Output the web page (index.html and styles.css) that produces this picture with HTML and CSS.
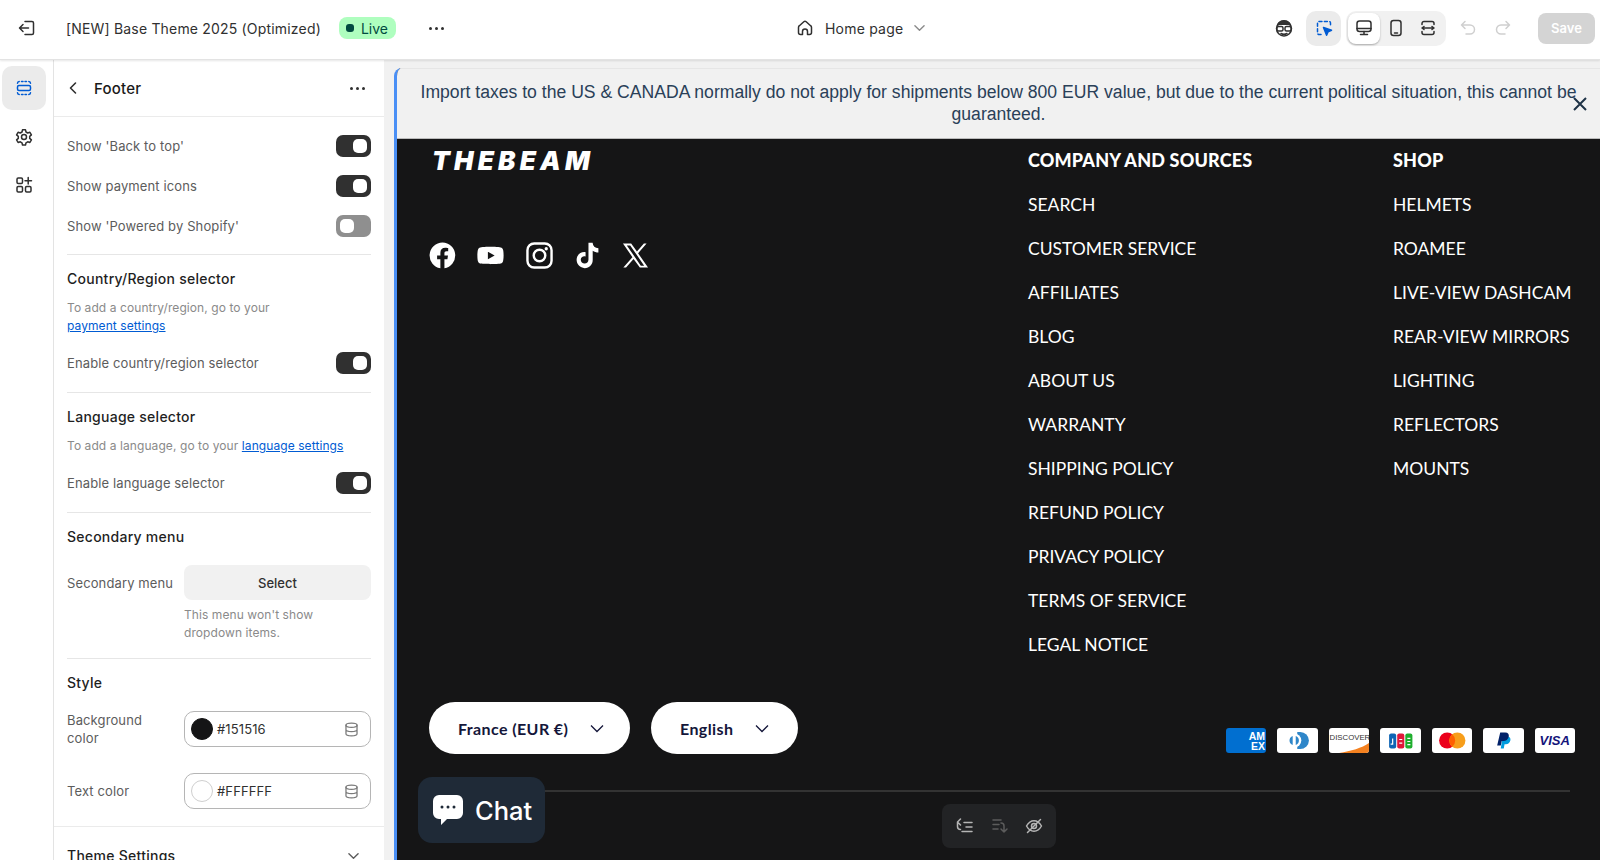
FILE: index.html
```html
<!DOCTYPE html>
<html lang="en">
<head>
  <meta charset="UTF-8">
  <title>Footer - Theme editor</title>
  <link rel="stylesheet" href="styles.css">
</head>
<body>

  <header class="topbar">
    <svg class="ico exit" viewBox="0 0 20 20"><path d="M8 3.500h7a1.500 1.500 0 0 1 1.500 1.500v10a1.500 1.500 0 0 1-1.500 1.500H8M11.500 10H3M6 6.500 2.500 10 6 13.500"/></svg>
    <span class="theme-name">[NEW] Base Theme 2025 (Optimized)</span>
    <span class="live"><i></i>Live</span>
    <span class="dots top-dots"><i></i><i></i><i></i></span>

    <div class="page-picker">
      <svg class="ico" viewBox="0 0 20 20"><path d="M7.500 16.500H5.500a2 2 0 0 1-2-2V9.500c0-.8.3-1.300.9-1.800l4.400-3.900a1.800 1.800 0 0 1 2.400 0l4.400 3.900c.6.5.9 1 .9 1.800v5a2 2 0 0 1-2 2h-2v-3a2.500 2.500 0 0 0-5 0z"/></svg>
      <span>Home page</span>
      <svg class="chev" viewBox="0 0 12 8"><path d="M1 1.500 6 6.500l5-5"/></svg>
    </div>

    <div class="top-tools">
      <svg class="ico face" viewBox="0 0 20 20"><circle cx="10" cy="10.500" r="7.500" fill="#fff"/><path class="solid" d="M3 9c-.5-4 3-7 7-7s7.500 3 7 7c-1-1.500-2-2-3-2H6c-1 0-2 .5-3 2z"/><rect x="3" y="8.500" width="6" height="4.500" rx="1.500" fill="#fff"/><rect x="11" y="8.500" width="6" height="4.500" rx="1.500" fill="#fff"/><path d="M7 15.500c2 1 4 1 6 0"/></svg>
      <span class="inspect">
        <svg class="ico blue" viewBox="0 0 20 20"><path stroke-dasharray="3 2.400" d="M7 16.500H5a1.500 1.500 0 0 1-1.500-1.500V5A1.500 1.500 0 0 1 5 3.500h10A1.500 1.500 0 0 1 16.500 5v2"/><path class="solid-blue" d="m9.500 9.500 8 2.700-3.400 1.500-1.500 3.600z"/></svg>
      </span>
      <div class="view-group">
        <span class="view on">
          <svg class="ico" viewBox="0 0 20 20"><rect x="3" y="3" width="14" height="10.500" rx="2.500"/><path d="M3 10.500h14M10 13.500v3M6.500 16.500h7"/></svg>
        </span>
        <span class="view">
          <svg class="ico" viewBox="0 0 20 20"><rect x="5" y="2.500" width="10" height="15" rx="2.500"/><path d="M8.500 15h3"/></svg>
        </span>
        <span class="view">
          <svg class="ico" viewBox="0 0 20 20"><path d="M4 6.500V5.500a2 2 0 0 1 2-2h8a2 2 0 0 1 2 2v1M4 13.500v1a2 2 0 0 0 2 2h8a2 2 0 0 0 2-2v-1M4 10h12M6 8.500 4 10l2 1.500M14 8.500l2 1.500-2 1.500"/></svg>
        </span>
      </div>
      <svg class="ico faded undo" viewBox="0 0 20 20"><path d="M7 3.500 3.500 7 7 10.500M3.500 7H12a4.500 4.500 0 0 1 0 9H8"/></svg>
      <svg class="ico faded redo" viewBox="0 0 20 20"><path d="M13 3.500 16.500 7 13 10.500M16.500 7H8a4.500 4.500 0 0 0 0 9h4"/></svg>
      <button class="save">Save</button>
    </div>
  </header>

  <div class="main">
    <nav class="rail">
      <span class="rail-btn active">
        <svg class="ico blue" viewBox="0 0 20 20"><rect x="3.500" y="7.500" width="13" height="5" rx="1.500"/><path d="M3.500 5.200A1.800 1.800 0 0 1 5.200 3.500M7.500 3.500h1.500M11 3.500h1.500M14.800 3.500a1.800 1.800 0 0 1 1.700 1.700M3.500 14.800a1.800 1.800 0 0 0 1.700 1.700M7.500 16.500h1.500M11 16.500h1.500M14.800 16.500a1.800 1.800 0 0 0 1.700-1.700"/></svg>
      </span>
      <span class="rail-btn">
        <svg class="ico" viewBox="0 0 20 20"><circle cx="10" cy="10" r="2.500"/><path d="M8.500 2.800h3l.5 2.200 1.700 1 2.200-.7 1.500 2.600-1.700 1.500v2l1.700 1.500-1.500 2.600-2.200-.7-1.700 1-.5 2.200h-3l-.5-2.200-1.700-1-2.200.7-1.500-2.600 1.700-1.500v-2L2.600 7.900l1.500-2.600 2.200.7 1.700-1z"/></svg>
      </span>
      <span class="rail-btn">
        <svg class="ico" viewBox="0 0 20 20"><rect x="3" y="3" width="5.500" height="5.500" rx="1.200"/><rect x="3" y="11.500" width="5.500" height="5.500" rx="1.200"/><rect x="11.500" y="11.500" width="5.500" height="5.500" rx="1.200"/><path d="M14.200 2.500v6.500M11 5.700h6.500"/></svg>
      </span>
    </nav>

    <aside class="panel">
      <div class="panel-head">
        <svg class="back" viewBox="0 0 10 14"><path d="M7.500 2 2.500 7l5 5"/></svg>
        <h1>Footer</h1>
        <span class="dots"><i></i><i></i><i></i></span>
      </div>

      <div class="settings">
        <section class="group first">
          <div class="row"><label>Show 'Back to top'</label><span class="toggle"></span></div>
          <div class="row"><label>Show payment icons</label><span class="toggle"></span></div>
          <div class="row"><label>Show 'Powered by Shopify'</label><span class="toggle off"></span></div>
        </section>

        <section class="group">
          <h2>Country/Region selector</h2>
          <p class="help">To add a country/region, go to your<br><a href="#">payment settings</a></p>
          <div class="row"><label>Enable country/region selector</label><span class="toggle"></span></div>
        </section>

        <section class="group">
          <h2>Language selector</h2>
          <p class="help">To add a language, go to your <a href="#">language settings</a></p>
          <div class="row"><label>Enable language selector</label><span class="toggle"></span></div>
        </section>

        <section class="group menu-group">
          <h2>Secondary menu</h2>
          <div class="field">
            <label>Secondary menu</label>
            <div>
              <button class="select">Select</button>
              <p class="help under">This menu won't show dropdown items.</p>
            </div>
          </div>
        </section>

        <section class="group last">
          <h2>Style</h2>
          <div class="field mid">
            <label>Background<br>color</label>
            <div class="color">
              <span class="swatch dark"></span><span class="hex">#151516</span>
              <svg class="ico db" viewBox="0 0 20 20"><ellipse cx="10" cy="5" rx="6.500" ry="2.500"/><path d="M3.500 5v10c0 1.400 2.900 2.500 6.500 2.500s6.500-1.100 6.500-2.500V5M3.500 10c0 1.400 2.900 2.500 6.500 2.500s6.500-1.100 6.500-2.500"/></svg>
            </div>
          </div>
          <div class="field mid">
            <label>Text color</label>
            <div class="color">
              <span class="swatch"></span><span class="hex">#FFFFFF</span>
              <svg class="ico db" viewBox="0 0 20 20"><ellipse cx="10" cy="5" rx="6.500" ry="2.500"/><path d="M3.500 5v10c0 1.400 2.900 2.500 6.500 2.500s6.500-1.100 6.500-2.500V5M3.500 10c0 1.400 2.900 2.500 6.500 2.500s6.500-1.100 6.500-2.500"/></svg>
            </div>
          </div>
        </section>

        <div class="accordion">
          <h2>Theme Settings</h2>
          <svg class="chev" viewBox="0 0 12 8"><path d="M1 1.500 6 6.500l5-5"/></svg>
        </div>
      </div>
    </aside>

    <div class="preview">
      <div class="frame">
        <div class="notice">
          <p>Import taxes to the US &amp; CANADA normally do not apply for shipments below 800 EUR value, but due to the current political situation, this cannot be guaranteed.</p>
          <svg class="notice-x" viewBox="0 0 16 16"><path d="m2 2 12 12M14 2 2 14"/></svg>
        </div>

        <footer class="site-footer">
          <div class="foot-top">
            <div class="brand">
              <div class="logo">THEBEAM</div>
              <div class="socials">
                <svg viewBox="0 0 28 28"><path d="M14 .5a13.500 13.500 0 0 0-2.200 26.800v-9.500H8.400V14h3.400v-2.900c0-3.400 2-5.200 5.100-5.200 1.500 0 3 .3 3 .3v3.300h-1.700c-1.700 0-2.200 1-2.200 2.100V14h3.700l-.6 3.800h-3.100v9.500A13.500 13.500 0 0 0 14 .5z"/></svg>
                <svg viewBox="0 0 28 28"><path d="M27 8c-.3-1.200-1.200-2.100-2.400-2.400C22.500 5 14 5 14 5s-8.500 0-10.600.6C2.200 5.900 1.300 6.800 1 8c-.6 2.100-.6 6-.6 6s0 3.900.6 6c.3 1.200 1.200 2.100 2.400 2.400C5.500 23 14 23 14 23s8.500 0 10.600-.6c1.200-.3 2.100-1.200 2.400-2.400.6-2.100.6-6 .6-6s0-3.900-.6-6zM11.300 17.900v-7.800l7 3.900z"/></svg>
                <svg viewBox="0 0 28 28"><rect class="line" x="1.500" y="1.500" width="25" height="25" rx="7"/><circle class="line" cx="14" cy="14" r="6"/><circle cx="21" cy="7" r="1.700"/></svg>
                <svg viewBox="0 0 28 28"><path d="M15 .8h4.300c.3 3.300 2.400 5.500 6 5.800v4.400c-2.200 0-4.200-.7-5.900-1.900v9.500c0 4.700-3.500 8.500-8.300 8.500S2.700 23 2.700 18.500c0-5 4.300-8.800 9.300-8v4.500c-2.600-.7-5 1-5 3.500 0 2.200 1.800 3.900 4 3.900 2.300 0 4-1.700 4-4.200z"/></svg>
                <svg viewBox="0 0 28 28"><path d="M1 1.500h8.500l6 8.300 7.200-8.300h2.800l-8.800 10.200L27 26.500h-8.500l-6.500-9-7.800 9H1.400l9.400-10.800zm4 2 14.500 21h3.500L8.500 3.500z"/></svg>
              </div>
            </div>
            <div class="foot-col company">
              <h3>COMPANY AND SOURCES</h3>
              <a>SEARCH</a><a>CUSTOMER SERVICE</a><a>AFFILIATES</a><a>BLOG</a><a>ABOUT US</a><a>WARRANTY</a><a>SHIPPING POLICY</a><a>REFUND POLICY</a><a>PRIVACY POLICY</a><a>TERMS OF SERVICE</a><a>LEGAL NOTICE</a>
            </div>
            <div class="foot-col">
              <h3>SHOP</h3>
              <a>HELMETS</a><a>ROAMEE</a><a>LIVE-VIEW DASHCAM</a><a>REAR-VIEW MIRRORS</a><a>LIGHTING</a><a>REFLECTORS</a><a>MOUNTS</a>
            </div>
          </div>

          <div class="foot-bottom">
            <button class="pill country">France (EUR €)<svg viewBox="0 0 14 9"><path d="M1 1.500 7 7.500l6-6"/></svg></button>
            <button class="pill lang">English<svg viewBox="0 0 14 9"><path d="M1 1.500 7 7.500l6-6"/></svg></button>
            <div class="cards">
              <span class="card amex"><b>AM<br>EX</b></span>
              <span class="card">
                <svg viewBox="0 0 40 24"><path fill="#2e86c9" d="M20 3.500h3a8.500 8.500 0 0 1 0 17h-3z"/><circle cx="17" cy="12" r="7" fill="#fff"/><path fill="#2e86c9" d="M15.500 7.500v9a4.800 4.800 0 0 1 0-9zm3 0a4.800 4.800 0 0 1 0 9z"/></svg>
              </span>
              <span class="card discover">
                <em>DISCOVER</em>
                <svg viewBox="0 0 40 24" preserveAspectRatio="none"><path fill="#f48120" d="M10 24C22 22 33 19 40 14v10z"/></svg>
              </span>
              <span class="card">
                <svg viewBox="0 0 40 24"><rect x="9" y="5" width="7" height="15" rx="2" fill="#0e64b4"/><rect x="17" y="5" width="7" height="15" rx="2" fill="#e0173a"/><rect x="25" y="5" width="7" height="15" rx="2" fill="#1fae2e"/><path d="M12.500 10v5.500h-2M19 11h3M19 14.500h3M27 10h3M27 13h3M27 16h3" stroke="#fff" stroke-width="1.200" fill="none"/></svg>
              </span>
              <span class="card">
                <svg viewBox="0 0 40 24"><circle cx="15" cy="12" r="8" fill="#eb001b"/><circle cx="25" cy="12" r="8" fill="#f79e1b"/><path fill="#ff5f00" d="M20 5.800a8 8 0 0 1 0 12.400 8 8 0 0 1 0-12.400z"/></svg>
              </span>
              <span class="card">
                <svg viewBox="0 0 40 24"><path fill="#009cde" d="M19.500 8h4.500c2.500 0 3.600 1.800 3 4-.5 2.400-2.200 3.700-4.400 3.700h-1.300l-.8 4.300h-3z"/><path fill="#012169" d="M17 4h5c2.700 0 4 1.600 3.400 4.200-.6 2.800-2.700 4.300-5.200 4.300h-1.700l-.9 4.500h-3.600z"/></svg>
              </span>
              <span class="card visa"><em>VISA</em></span>
            </div>
          </div>

          <div class="foot-rule"></div>
        </footer>

        <div class="chat">
          <svg viewBox="0 0 32 32"><path fill="#fff" d="M7 1h18a6 6 0 0 1 6 6v12a6 6 0 0 1-6 6H15l-6 6v-6H7a6 6 0 0 1-6-6V7a6 6 0 0 1 6-6z"/><circle cx="10" cy="13" r="1.500" fill="#1f2a37"/><circle cx="16" cy="13" r="1.500" fill="#1f2a37"/><circle cx="22" cy="13" r="1.500" fill="#1f2a37"/></svg>
          <span>Chat</span>
        </div>

        <div class="section-tools">
          <svg class="ico" viewBox="0 0 20 20"><path d="M9 6.500h8M11 11h6M7 15.500h10M5.500 3 2.500 6 5.500 9M2.500 6v4.500a3 3 0 0 0 3 3"/></svg>
          <svg class="ico dim" viewBox="0 0 20 20"><path d="M3 4h8M3 8.500h6M3 13h5M14 16l3-3M14 16l-3-3M14 16V10a3 3 0 0 0-3-3"/></svg>
          <svg class="ico" viewBox="0 0 20 20"><path d="M2.500 10c2-3.500 4.500-5.200 7.500-5.200s5.500 1.700 7.500 5.200c-2 3.500-4.500 5.200-7.500 5.200S4.500 13.500 2.500 10zM16.500 3.500l-13 13"/><circle cx="10" cy="10" r="2.500"/></svg>
        </div>
      </div>
    </div>
  </div>

</body>
</html>
```

FILE: styles.css
```css
* { box-sizing: border-box; }
html, body {
  margin: 0;
  height: 100%;
  overflow: hidden;
  font-family: "Inter", sans-serif;
  font-size: 13px;
  letter-spacing: .12px;
  color: #303030;
  background: #f1f1f1;
}

.ico {
  width: 20px;
  height: 20px;
  flex: none;
  fill: none;
  stroke: #303030;
  stroke-width: 1.5;
  stroke-linecap: round;
  stroke-linejoin: round;
}
.ico.blue { stroke: #005bd3; }
.ico.faded { stroke: #cfcfcf; }
.solid { fill: #303030; stroke: none; }
.solid-blue { fill: #005bd3; stroke: #005bd3; }

.dots { display: flex; gap: 3px; }
.dots i {
  width: 3px;
  height: 3px;
  border-radius: 50%;
  background: #303030;
}

/* top bar */
.topbar {
  height: 60px;
  display: flex;
  align-items: center;
  padding: 0 0 3px 17px;
  background: #fff;
  border-bottom: 1px solid #e3e3e3;
  box-shadow: 0 1px 2px rgba(0,0,0,.1);
  position: relative;
  z-index: 2;
}
.theme-name {
  margin-left: 29px;
  font-size: 14px;
  letter-spacing: .18px;
}
.live {
  display: flex;
  align-items: center;
  gap: 7px;
  margin-left: 18px;
  height: 22px;
  padding: 0 8px 0 7px;
  border-radius: 8px;
  background: #affebf;
  color: #014b40;
  font-size: 14px;
  letter-spacing: 0;
}
.live i {
  width: 8px;
  height: 8px;
  border-radius: 3px;
  background: #014b40;
}
.top-dots { margin-left: 33px; }
.page-picker {
  position: absolute;
  left: 795px;
  display: flex;
  align-items: center;
  font-size: 14px;
  letter-spacing: .2px;
}
.page-picker span { margin-left: 10px; }
.chev {
  width: 11px;
  height: 8px;
  fill: none;
  stroke: #8a8a8a;
  stroke-width: 1.5;
  stroke-linecap: round;
  stroke-linejoin: round;
}
.page-picker .chev { margin-left: 11px; }
.top-tools {
  margin-left: auto;
  display: flex;
  align-items: center;
  padding-right: 5px;
}
.inspect {
  width: 35px;
  height: 35px;
  margin-left: 12px;
  border-radius: 10px;
  background: #ebebeb;
  display: flex;
  align-items: center;
  justify-content: center;
}
.view-group {
  display: flex;
  margin-left: 5px;
  border-radius: 10px;
  background: #f1f1f1;
  padding: 2px;
}
.view {
  width: 32px;
  height: 31px;
  border-radius: 8px;
  display: flex;
  align-items: center;
  justify-content: center;
}
.view.on {
  background: #fff;
  box-shadow: 0 1px 2px rgba(0,0,0,.3);
}
.undo { margin-left: 12px; }
.redo { margin-left: 15px; }
.save {
  margin-left: 25px;
  width: 57px;
  height: 31px;
  border: 0;
  border-radius: 8px;
  background: #d4d4d4;
  color: #fff;
  font: 600 13px "Inter", sans-serif;
}

.main {
  display: flex;
  height: 800px;
}

/* icon rail */
.rail {
  width: 54px;
  flex: none;
  background: #fff;
  border-right: 1px solid #e3e3e3;
  padding: 6px 0 0 2px;
  display: flex;
  flex-direction: column;
}
.rail-btn {
  width: 44px;
  height: 44px;
  margin-bottom: 4.500px;
  border-radius: 10px;
  display: flex;
  align-items: center;
  justify-content: center;
}
.rail-btn.active { background: #ebebeb; }

/* settings panel */
.panel {
  width: 330px;
  flex: none;
  background: #fff;
  overflow: hidden;
}
.panel-head {
  height: 57px;
  display: flex;
  align-items: center;
  padding: 0 19px 0 13px;
  border-bottom: 1px solid #ebebeb;
}
.back {
  width: 12px;
  height: 14px;
  fill: none;
  stroke: #303030;
  stroke-width: 1.6;
  stroke-linecap: round;
  stroke-linejoin: round;
}
.panel-head h1 {
  margin: 0 auto 0 15px;
  font-size: 15px;
  font-weight: 500;
  letter-spacing: .2px;
  color: #1a1a1a;
}
.settings { padding: 0 13px; }
.group {
  padding: 15px 0 9px;
  border-bottom: 1px solid #e6e6e6;
}
.group.first { padding: 9px 0 8px; }
.group.menu-group { padding-bottom: 16px; }
.group.last {
  margin: 0 -13px;
  padding: 15px 13px 17px;
  border-bottom: 1px solid #ebebeb;
}
h2 {
  margin: 0;
  font-size: 14px;
  line-height: 18px;
  font-weight: 500;
  letter-spacing: .26px;
  color: #1f1f1f;
}
.row {
  height: 40px;
  display: flex;
  align-items: center;
  justify-content: space-between;
}
.help + .row { margin-top: 8px; }
.row label, .field label { color: #5c5c5c; }
.toggle {
  width: 35px;
  height: 22px;
  border-radius: 7px;
  background: #303030;
  padding: 4px;
  display: flex;
  justify-content: flex-end;
}
.toggle::after {
  content: "";
  width: 14px;
  height: 14px;
  border-radius: 5px;
  background: #fff;
}
.toggle.off {
  background: #8f8f8f;
  justify-content: flex-start;
}
.help {
  margin: 11px 0 0;
  font-size: 12px;
  line-height: 18px;
  letter-spacing: .08px;
  color: #8a8a8a;
}
.help a { color: #005bd3; }
.help.under {
  margin: 6px 0 0;
  width: 170px;
}
.field {
  display: grid;
  grid-template-columns: 117px 187px;
  align-items: start;
  margin-top: 19px;
}
.field label { padding-top: 9px; line-height: 18px; }
.field.mid { align-items: center; }
.field.mid + .field.mid { margin-top: 26px; }
.field.mid label { padding-top: 0; }
.select {
  width: 187px;
  height: 35px;
  border: 0;
  border-radius: 8px;
  background: #f1f1f1;
  color: #303030;
  font: 500 13px "Inter", sans-serif;
}
.color {
  height: 36px;
  display: flex;
  align-items: center;
  padding: 0 10px 0 6px;
  border: 1px solid #b5b5b5;
  border-radius: 10px;
}
.swatch {
  width: 22px;
  height: 22px;
  border-radius: 50%;
  border: 1px solid #cfcfcf;
  background: #fff;
}
.swatch.dark { background: #151516; border-color: #151516; }
.hex { margin-left: 4px; }
.db { margin-left: auto; width: 17px; height: 17px; stroke: #7a7a7a; }
.accordion {
  height: 58px;
  display: flex;
  align-items: center;
  justify-content: space-between;
  padding-right: 12px;
}
.accordion .chev { stroke: #5c5c5c; }

/* preview */
.preview {
  flex: 1;
  min-width: 0;
  padding: 8px 0 0 10px;
  background: #f1f1f1;
}
.frame {
  position: relative;
  height: 792px;
  overflow: hidden;
  border-left: 3px solid #4a8ff5;
  border-top-left-radius: 8px;
  background: #151516;
  letter-spacing: 0;
}
.notice {
  height: 71px;
  padding: 12px 20px 0;
  background: #f1f1f1;
  border-top: 1px solid #e6e6e6;
  border-bottom: 1px solid #bbb;
  text-align: center;
  font-family: "Liberation Sans", Arial, sans-serif;
  font-size: 17.600px;
  line-height: 22px;
  color: #2a4058;
}
.notice p { margin: 0; }
.notice-x {
  position: absolute;
  right: 12px;
  top: 28px;
  width: 16px;
  height: 16px;
  fill: none;
  stroke: #1f3347;
  stroke-width: 2;
}

.site-footer {
  color: #fff;
  font-family: "Lato", sans-serif;
}
.foot-top {
  display: grid;
  grid-template-columns: 631px 365px 1fr;
  padding-top: 6px;
}
.brand { padding-left: 35px; }
.logo {
  font: italic 900 26px/32px "Inter", sans-serif;
  letter-spacing: 4.200px;
}
.socials {
  display: flex;
  gap: 21.300px;
  margin-top: 65px;
  margin-left: -3px;
}
.socials svg {
  width: 27px;
  height: 27px;
  fill: #fff;
}
.socials .line { fill: none; stroke: #fff; stroke-width: 2.500; }
.foot-col h3 {
  margin: 0;
  font-size: 18px;
  line-height: 31px;
  font-weight: 900;
  letter-spacing: .17px;
}
.foot-col a {
  display: block;
  margin-top: 14px;
  font-size: 17.500px;
  line-height: 30px;
}
.foot-bottom {
  display: flex;
  align-items: center;
  padding: 42px 25px 0 32px;
}
.pill {
  height: 52px;
  display: flex;
  align-items: center;
  border: 0;
  border-radius: 26px;
  background: #fff;
  color: #14163a;
  font: 700 16px "Lato", sans-serif;
  letter-spacing: .4px;
  white-space: nowrap;
  padding: 0 0 0 29px;
}
.pill svg {
  width: 14px;
  height: 9px;
  flex: none;
  margin-left: 22px;
  fill: none;
  stroke: #14163a;
  stroke-width: 1.300;
}
.country { width: 201px; }
.lang { width: 147px; margin-left: 21px; }
.cards {
  margin-left: auto;
  margin-top: 24px;
  display: flex;
  gap: 11px;
}
.card {
  width: 40.500px;
  height: 25px;
  border-radius: 3px;
  background: #fff;
  overflow: hidden;
  position: relative;
  display: block;
}
.card svg {
  display: block;
  width: 100%;
  height: 100%;
}
.amex {
  background: #016fd0;
  color: #fff;
  text-align: right;
}
.amex b {
  display: block;
  font: 900 10.500px/10px "Liberation Sans", sans-serif;
  padding: 3px 1px 0 0;
}
.discover svg { position: absolute; inset: 0; }
.discover em {
  position: absolute;
  left: 1px;
  top: 5px;
  font: 400 7.800px "Liberation Sans", sans-serif;
  color: #333;
}
.visa em {
  display: block;
  text-align: center;
  font: italic 900 13px/25px "Liberation Sans", sans-serif;
  color: #14147a;
}
.foot-rule {
  height: 2px;
  margin: 36px 30px 0 32px;
  background: #333;
}

.chat {
  position: absolute;
  left: 21px;
  top: 709px;
  width: 127px;
  height: 66px;
  display: flex;
  align-items: center;
  gap: 11px;
  padding-left: 14px;
  border-radius: 14px;
  background: #1f2a37;
  color: #fff;
  font: 500 25.500px "Inter", sans-serif;
}
.chat svg { width: 32px; height: 32px; }

.section-tools {
  position: absolute;
  left: 545px;
  top: 736px;
  width: 114px;
  height: 44px;
  display: flex;
  align-items: center;
  justify-content: space-between;
  padding: 0 12px 0 13px;
  border-radius: 8px;
  background: #222325;
}
.section-tools .ico { stroke: #b5b5b5; }
.section-tools .ico.dim { stroke: #5c5c5c; }
```
